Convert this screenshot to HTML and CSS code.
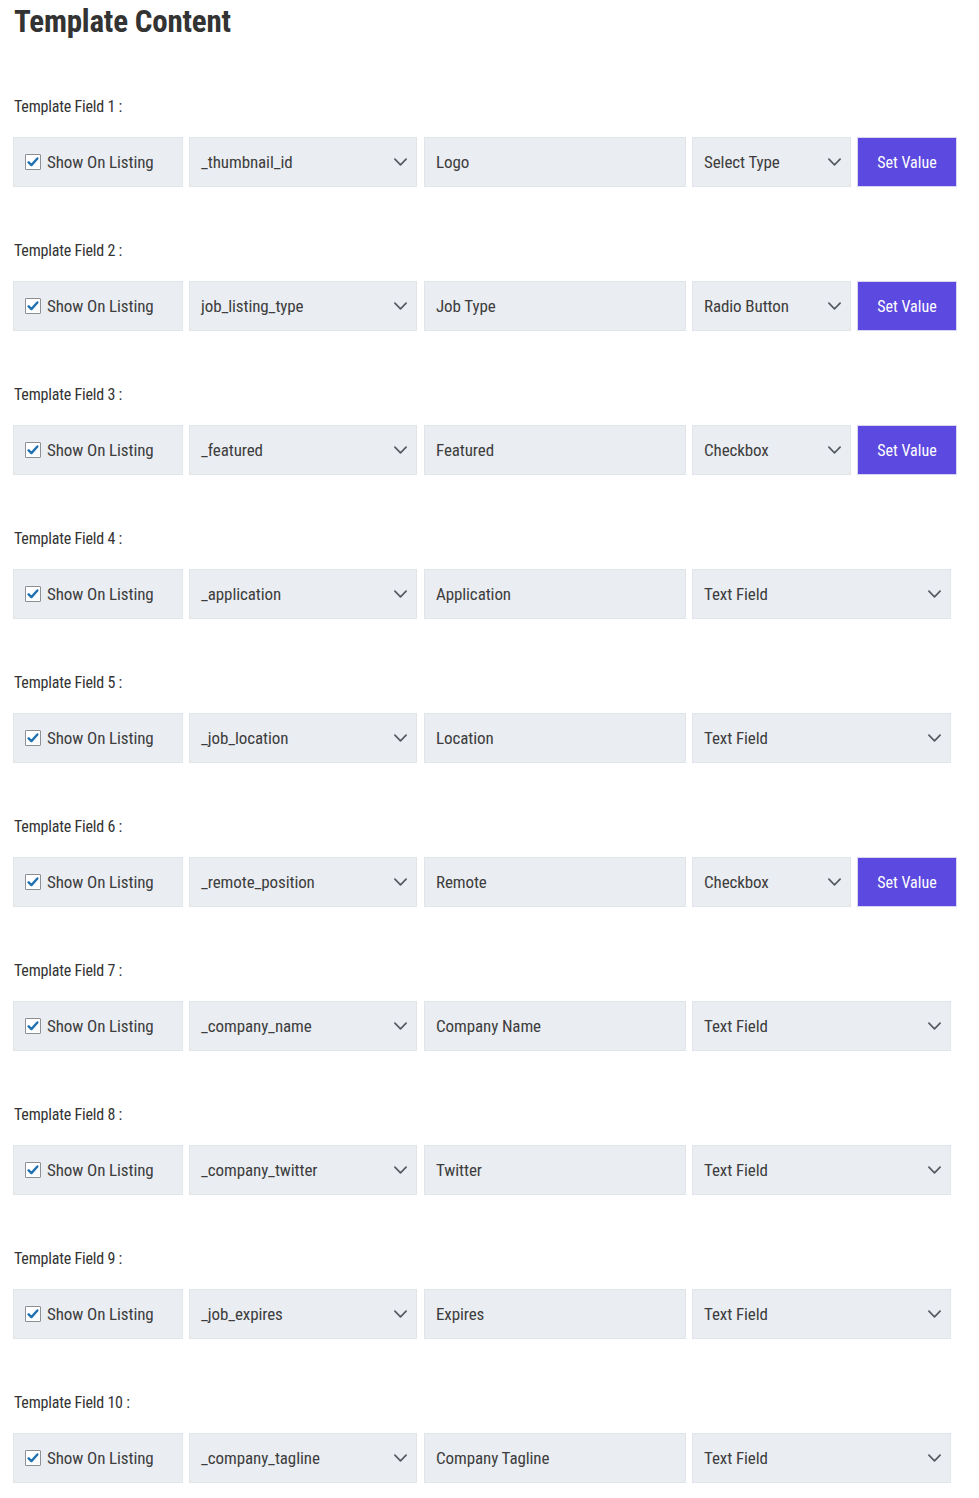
FILE: index.html
```html
<!DOCTYPE html>
<html lang="en">
<head>
<meta charset="utf-8">
<title>Template Content</title>
<link rel="stylesheet" href="styles.css">
</head>
<body>
<div class="page">
  <h2 class="title">Template Content</h2>

  <div class="field">
    <div class="field-label">Template Field 1 :</div>
    <div class="field-row">
      <label class="cell check-cell"><span class="checkbox"><svg viewBox="0 0 16 16"><path d="M3 8.3l3.2 3.2L13 4"/></svg></span>Show On Listing</label>
      <div class="cell select key"><span>_thumbnail_id</span><svg class="chev" viewBox="0 0 14 8"><path d="M1 1l6 6 6-6"/></svg></div>
      <div class="cell input">Logo</div>
      <div class="cell select type"><span>Select Type</span><svg class="chev" viewBox="0 0 14 8"><path d="M1 1l6 6 6-6"/></svg></div>
      <button class="btn">Set Value</button>
    </div>
  </div>

  <div class="field">
    <div class="field-label">Template Field 2 :</div>
    <div class="field-row">
      <label class="cell check-cell"><span class="checkbox"><svg viewBox="0 0 16 16"><path d="M3 8.3l3.2 3.2L13 4"/></svg></span>Show On Listing</label>
      <div class="cell select key"><span>job_listing_type</span><svg class="chev" viewBox="0 0 14 8"><path d="M1 1l6 6 6-6"/></svg></div>
      <div class="cell input">Job Type</div>
      <div class="cell select type"><span>Radio Button</span><svg class="chev" viewBox="0 0 14 8"><path d="M1 1l6 6 6-6"/></svg></div>
      <button class="btn">Set Value</button>
    </div>
  </div>

  <div class="field">
    <div class="field-label">Template Field 3 :</div>
    <div class="field-row">
      <label class="cell check-cell"><span class="checkbox"><svg viewBox="0 0 16 16"><path d="M3 8.3l3.2 3.2L13 4"/></svg></span>Show On Listing</label>
      <div class="cell select key"><span>_featured</span><svg class="chev" viewBox="0 0 14 8"><path d="M1 1l6 6 6-6"/></svg></div>
      <div class="cell input">Featured</div>
      <div class="cell select type"><span>Checkbox</span><svg class="chev" viewBox="0 0 14 8"><path d="M1 1l6 6 6-6"/></svg></div>
      <button class="btn">Set Value</button>
    </div>
  </div>

  <div class="field">
    <div class="field-label">Template Field 4 :</div>
    <div class="field-row">
      <label class="cell check-cell"><span class="checkbox"><svg viewBox="0 0 16 16"><path d="M3 8.3l3.2 3.2L13 4"/></svg></span>Show On Listing</label>
      <div class="cell select key"><span>_application</span><svg class="chev" viewBox="0 0 14 8"><path d="M1 1l6 6 6-6"/></svg></div>
      <div class="cell input">Application</div>
      <div class="cell select type wide"><span>Text Field</span><svg class="chev" viewBox="0 0 14 8"><path d="M1 1l6 6 6-6"/></svg></div>
    </div>
  </div>

  <div class="field">
    <div class="field-label">Template Field 5 :</div>
    <div class="field-row">
      <label class="cell check-cell"><span class="checkbox"><svg viewBox="0 0 16 16"><path d="M3 8.3l3.2 3.2L13 4"/></svg></span>Show On Listing</label>
      <div class="cell select key"><span>_job_location</span><svg class="chev" viewBox="0 0 14 8"><path d="M1 1l6 6 6-6"/></svg></div>
      <div class="cell input">Location</div>
      <div class="cell select type wide"><span>Text Field</span><svg class="chev" viewBox="0 0 14 8"><path d="M1 1l6 6 6-6"/></svg></div>
    </div>
  </div>

  <div class="field">
    <div class="field-label">Template Field 6 :</div>
    <div class="field-row">
      <label class="cell check-cell"><span class="checkbox"><svg viewBox="0 0 16 16"><path d="M3 8.3l3.2 3.2L13 4"/></svg></span>Show On Listing</label>
      <div class="cell select key"><span>_remote_position</span><svg class="chev" viewBox="0 0 14 8"><path d="M1 1l6 6 6-6"/></svg></div>
      <div class="cell input">Remote</div>
      <div class="cell select type"><span>Checkbox</span><svg class="chev" viewBox="0 0 14 8"><path d="M1 1l6 6 6-6"/></svg></div>
      <button class="btn">Set Value</button>
    </div>
  </div>

  <div class="field">
    <div class="field-label">Template Field 7 :</div>
    <div class="field-row">
      <label class="cell check-cell"><span class="checkbox"><svg viewBox="0 0 16 16"><path d="M3 8.3l3.2 3.2L13 4"/></svg></span>Show On Listing</label>
      <div class="cell select key"><span>_company_name</span><svg class="chev" viewBox="0 0 14 8"><path d="M1 1l6 6 6-6"/></svg></div>
      <div class="cell input">Company Name</div>
      <div class="cell select type wide"><span>Text Field</span><svg class="chev" viewBox="0 0 14 8"><path d="M1 1l6 6 6-6"/></svg></div>
    </div>
  </div>

  <div class="field">
    <div class="field-label">Template Field 8 :</div>
    <div class="field-row">
      <label class="cell check-cell"><span class="checkbox"><svg viewBox="0 0 16 16"><path d="M3 8.3l3.2 3.2L13 4"/></svg></span>Show On Listing</label>
      <div class="cell select key"><span>_company_twitter</span><svg class="chev" viewBox="0 0 14 8"><path d="M1 1l6 6 6-6"/></svg></div>
      <div class="cell input">Twitter</div>
      <div class="cell select type wide"><span>Text Field</span><svg class="chev" viewBox="0 0 14 8"><path d="M1 1l6 6 6-6"/></svg></div>
    </div>
  </div>

  <div class="field">
    <div class="field-label">Template Field 9 :</div>
    <div class="field-row">
      <label class="cell check-cell"><span class="checkbox"><svg viewBox="0 0 16 16"><path d="M3 8.3l3.2 3.2L13 4"/></svg></span>Show On Listing</label>
      <div class="cell select key"><span>_job_expires</span><svg class="chev" viewBox="0 0 14 8"><path d="M1 1l6 6 6-6"/></svg></div>
      <div class="cell input">Expires</div>
      <div class="cell select type wide"><span>Text Field</span><svg class="chev" viewBox="0 0 14 8"><path d="M1 1l6 6 6-6"/></svg></div>
    </div>
  </div>

  <div class="field">
    <div class="field-label">Template Field 10 :</div>
    <div class="field-row">
      <label class="cell check-cell"><span class="checkbox"><svg viewBox="0 0 16 16"><path d="M3 8.3l3.2 3.2L13 4"/></svg></span>Show On Listing</label>
      <div class="cell select key"><span>_company_tagline</span><svg class="chev" viewBox="0 0 14 8"><path d="M1 1l6 6 6-6"/></svg></div>
      <div class="cell input">Company Tagline</div>
      <div class="cell select type wide"><span>Text Field</span><svg class="chev" viewBox="0 0 14 8"><path d="M1 1l6 6 6-6"/></svg></div>
    </div>
  </div>
</div>
</body>
</html>
```

FILE: styles.css
```css
html, body {
  margin: 0;
  padding: 0;
  background: #ffffff;
}

.page {
  padding: 0 0 0 13px;
  font-family: "Liberation Sans Narrow", "Roboto Condensed", "DejaVu Sans Condensed", "Liberation Sans", sans-serif;
  color: #3a3a3a;
}

.title {
  margin: 0 0 51px 1px;
  font-size: 31px;
  line-height: 44px;
  font-weight: 700;
  color: #333333;
  letter-spacing: -0.2px;
}

.field {
  margin-bottom: 52px;
}

.field-label {
  height: 24px;
  line-height: 24px;
  font-size: 16px;
  color: #333333;
  letter-spacing: -0.2px;
  margin: 0 0 18px 1px;
}

.field-row {
  display: flex;
  height: 50px;
}

.cell {
  box-sizing: border-box;
  height: 50px;
  background: #eaedf2;
  border: 1px solid #e1e4e9;
  display: flex;
  align-items: center;
  font-size: 17px;
  letter-spacing: -0.1px;
  color: #3d3d3d;
  padding: 0 11px;
}

.check-cell {
  width: 170px;
  margin-right: 6px;
  cursor: pointer;
}

.checkbox {
  box-sizing: border-box;
  width: 16px;
  height: 16px;
  border: 1px solid #8c8f94;
  background: #ffffff;
  border-radius: 1px;
  margin: 0 6px 0 0;
  display: flex;
  align-items: center;
  justify-content: center;
  flex: none;
}

.checkbox svg {
  width: 14px;
  height: 14px;
  fill: none;
  stroke: #2271b1;
  stroke-width: 2.8;
  stroke-linecap: round;
  stroke-linejoin: round;
}

.select {
  justify-content: space-between;
}

.chev {
  width: 13px;
  height: 8px;
  fill: none;
  stroke: #555a60;
  stroke-width: 1.8;
  stroke-linecap: round;
  stroke-linejoin: round;
  flex: none;
  margin-right: -2px;
}

.key {
  width: 228px;
  margin-right: 7px;
}

.input {
  width: 262px;
  margin-right: 6px;
}

.type {
  width: 159px;
  margin-right: 6px;
}

.type.wide {
  width: 259px;
  margin-right: 0;
}

.btn {
  box-sizing: border-box;
  width: 100px;
  height: 50px;
  background: #5c49e0;
  border: 1px solid #d9d6f5;
  color: #ffffff;
  font-family: inherit;
  font-size: 16px;
  padding: 0;
  cursor: pointer;
}
```
